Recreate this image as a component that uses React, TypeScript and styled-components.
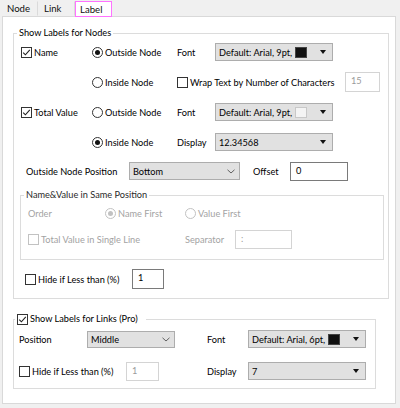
import styled, { createGlobalStyle } from "styled-components";

// Global
const GlobalStyle = createGlobalStyle`
  html, body {
    margin: 0;
    padding: 0;
    background: #f0f0f0;
  }
  body {
    font-family: Lato, "Liberation Sans", sans-serif;
    font-size: 9.2px;
    color: #000;
  }
`;

// Styled
const Window = styled.div`
  width: 400px;
  height: 408px;
  background: #f0f0f0;
  display: flex;
  flex-direction: column;
  overflow: hidden;
`;

const TabStrip = styled.div`
  display: flex;
  height: 16px;
  padding-left: 2px;
  align-items: flex-end;
  position: relative;
  z-index: 1;
`;

const Tab = styled.div<{ $active?: boolean; $width: number; $pad?: number }>`
  box-sizing: border-box;
  width: ${(p) => p.$width}px;
  height: ${(p) => (p.$active ? 16 : 15)}px;
  margin-bottom: ${(p) => (p.$active ? -1 : 0)}px;
  padding-left: ${(p) => p.$pad ?? 4}px;
  display: flex;
  align-items: center;
  font-size: 9.6px;
  background: ${(p) => (p.$active ? "#fff" : "#f0f0f0")};
  border: 1px solid ${(p) => (p.$active ? "#ff72ff" : "transparent")};
  border-right-color: ${(p) => (p.$active ? "#ff72ff" : "#dadada")};
  color: #111;
`;

const Panel = styled.div`
  box-sizing: border-box;
  width: 394px;
  height: 388px;
  margin-left: 2px;
  background: #fff;
  border: 1px solid #d9d9d9;
  padding: 9px 0 0 10px;
`;

const Group = styled.fieldset<{ $width: number }>`
  box-sizing: border-box;
  width: ${(p) => p.$width}px;
  margin: 0;
  border: 1px solid #dcdcdc;
  min-width: 0;
`;

const NodeGroup = styled(Group)`
  padding: 0 0 8px 7px;
`;

const LinkGroup = styled(Group)`
  margin-top: 13px;
  padding: 3px 0 7px 5px;
`;

const InnerGroup = styled(Group)`
  margin: 6px 0 0 -1px;
  padding: 0 0 9px 7px;
`;

const Legend = styled.legend<{ $muted?: boolean; $right?: number }>`
  padding: 0 ${(p) => p.$right ?? 2}px 0 2px;
  margin-left: -4px;
  line-height: 14px;
  height: 14px;
  display: flex;
  align-items: center;
  color: ${(p) => (p.$muted ? "#2a2a2a" : "#000")};
`;

const NodeGrid = styled.div`
  display: grid;
  grid-template-columns: 71px 85px 38px 118px 12px 35px;
  grid-auto-rows: 24px;
  row-gap: 6px;
  align-items: center;
`;

const InnerGrid = styled.div`
  display: grid;
  grid-template-columns: 77px 80px 50px 57px;
  grid-auto-rows: 22px;
  row-gap: 4px;
  align-items: center;
`;

const LinkGrid = styled.div`
  display: grid;
  grid-template-columns: 68px 88px 32px 41px 118px;
  grid-template-rows: 20px 20px;
  row-gap: 12px;
  align-items: center;
`;

const Row = styled.div<{ $top: number; $indent: number }>`
  display: flex;
  align-items: center;
  height: 22px;
  margin-top: ${(p) => p.$top}px;
  padding-left: ${(p) => p.$indent}px;
`;

const Cell = styled.div<{ $span?: string }>`
  display: flex;
  align-items: center;
  grid-column: ${(p) => p.$span ?? "auto"};
`;

const Text = styled.span<{ $disabled?: boolean; $width?: number }>`
  color: ${(p) => (p.$disabled ? "#a3a3a3" : "#000")};
  white-space: nowrap;
  ${(p) => (p.$width ? `width: ${p.$width}px; flex: none;` : "")}
`;

const Option = styled.label<{ $width?: number }>`
  display: flex;
  align-items: center;
  gap: 2px;
  white-space: nowrap;
  ${(p) => (p.$width ? `width: ${p.$width}px; flex: none;` : "")}
`;

const Box = styled.span<{ $disabled?: boolean }>`
  box-sizing: border-box;
  width: 11px;
  height: 11px;
  flex: none;
  border: 1px solid ${(p) => (p.$disabled ? "#c2c2c2" : "#333")};
  background: #fff;
  display: flex;
  align-items: center;
  justify-content: center;
`;

const Circle = styled(Box)`
  border-radius: 50%;
`;

const Dot = styled.span<{ $disabled?: boolean }>`
  width: 5px;
  height: 5px;
  border-radius: 50%;
  background: ${(p) => (p.$disabled ? "#c2c2c2" : "#111")};
`;

const Combo = styled.div<{ $width: number; $height: number }>`
  box-sizing: border-box;
  width: ${(p) => p.$width}px;
  height: ${(p) => p.$height}px;
  flex: none;
  background: #e1e1e1;
  border: 1px solid #adadad;
  display: flex;
  align-items: center;
  padding: 0 3px 0 3px;
  color: #000;
`;

const ComboText = styled.span`
  flex: 1;
  min-width: 0;
  white-space: nowrap;
`;

const Swatch = styled.span<{ $light?: boolean }>`
  box-sizing: border-box;
  flex: none;
  width: 12px;
  height: 11px;
  margin: 0 13px 0 2px;
  background: ${(p) => (p.$light ? "#f4f4f4" : "#111")};
  border: 1px solid ${(p) => (p.$light ? "#c8c8c8" : "#444")};
`;

const Arrow = styled.span`
  flex: none;
  width: 0;
  height: 0;
  border-left: 3.5px solid transparent;
  border-right: 3.5px solid transparent;
  border-top: 4px solid #111;
  margin-right: 3px;
`;

const Field = styled.div<{
  $width: number;
  $height: number;
  $disabled?: boolean;
}>`
  box-sizing: border-box;
  width: ${(p) => p.$width}px;
  height: ${(p) => p.$height}px;
  flex: none;
  border: 1px solid ${(p) => (p.$disabled ? "#d4d4d4" : "#7a7a7a")};
  background: #fff;
  color: ${(p) => (p.$disabled ? "#9a9a9a" : "#000")};
  padding: 1px 0 0 5px;
  line-height: 14px;
`;

// Parts
const CheckBox = ({
  label,
  checked,
  disabled,
  width,
}: {
  label: string;
  checked?: boolean;
  disabled?: boolean;
  width?: number;
}) => (
  <Option $width={width}>
    <Box $disabled={disabled}>
      {checked && (
        <svg width="9" height="9" viewBox="0 0 9 9">
          <polyline
            points="1.2,4.6 3.4,6.8 7.8,1.8"
            fill="none"
            stroke="#222"
            strokeWidth="1.1"
          />
        </svg>
      )}
    </Box>
    <Text $disabled={disabled}>{label}</Text>
  </Option>
);

const RadioButton = ({
  label,
  checked,
  disabled,
}: {
  label: string;
  checked?: boolean;
  disabled?: boolean;
}) => (
  <Option>
    <Circle $disabled={disabled}>{checked && <Dot $disabled={disabled} />}</Circle>
    <Text $disabled={disabled}>{label}</Text>
  </Option>
);

const Chevron = () => (
  <svg width="8" height="5" viewBox="0 0 8 5" style={{ marginRight: 1 }}>
    <polyline points="0.5,0.8 4,4 7.5,0.8" fill="none" stroke="#606060" strokeWidth="1" />
  </svg>
);

const Select = ({
  value,
  width,
  height = 18,
  swatch,
  chevron,
}: {
  value: string;
  width: number;
  height?: number;
  swatch?: "dark" | "light";
  chevron?: boolean;
}) => (
  <Combo $width={width} $height={height}>
    <ComboText>{value}</ComboText>
    {swatch && <Swatch $light={swatch === "light"} />}
    {chevron ? <Chevron /> : <Arrow />}
  </Combo>
);

const App = () => {
  return (
    <>
      <GlobalStyle />
      <Window>
        <TabStrip>
          <Tab $width={36}>Node</Tab>
          <Tab $width={37} $pad={5}>
            Link
          </Tab>
          <Tab $width={37} $active>
            Label
          </Tab>
        </TabStrip>
        <Panel>
          <NodeGroup $width={376}>
            <Legend>Show Labels for Nodes</Legend>
            <NodeGrid>
              <CheckBox label="Name" checked />
              <RadioButton label="Outside Node" checked />
              <Text>Font</Text>
              <Select value="Default: Arial, 9pt," width={118} swatch="dark" />
              <span />
              <span />

              <span />
              <RadioButton label="Inside Node" />
              <Cell $span="3 / 5">
                <CheckBox label="Wrap Text by Number of Characters" />
              </Cell>
              <span />
              <Field $width={35} $height={20} $disabled>
                15
              </Field>

              <CheckBox label="Total Value" checked />
              <RadioButton label="Outside Node" />
              <Text>Font</Text>
              <Select value="Default: Arial, 9pt," width={118} swatch="light" />
              <span />
              <span />

              <span />
              <RadioButton label="Inside Node" checked />
              <Text>Display</Text>
              <Select value="12.34568" width={118} />
            </NodeGrid>

            <Row $top={6} $indent={5}>
              <Text $width={103}>Outside Node Position</Text>
              <Select value="Bottom" width={111} chevron />
              <Text $width={37} style={{ marginLeft: 13 }}>
                Offset
              </Text>
              <Field $width={58} $height={19}>
                0
              </Field>
            </Row>

            <InnerGroup $width={364}>
              <Legend $muted>Name&amp;Value in Same Position</Legend>
              <InnerGrid>
                <Text $disabled>Order</Text>
                <RadioButton label="Name First" checked disabled />
                <Cell $span="3 / 5">
                  <RadioButton label="Value First" disabled />
                </Cell>

                <Cell $span="1 / 3">
                  <CheckBox label="Total Value in Single Line" disabled />
                </Cell>
                <Text $disabled>Separator</Text>
                <Field $width={57} $height={19} $disabled>
                  :
                </Field>
              </InnerGrid>
            </InnerGroup>

            <Row $top={8} $indent={4}>
              <CheckBox label="Hide if Less than (%)" width={107} />
              <Field $width={32} $height={20}>
                1
              </Field>
            </Row>
          </NodeGroup>

          <LinkGroup $width={363}>
            <Legend $right={8}>
              <CheckBox label="Show Labels for Links (Pro)" checked />
            </Legend>
            <LinkGrid>
              <Text>Position</Text>
              <Select value="Middle" width={88} height={17} chevron />
              <span />
              <Text>Font</Text>
              <Select value="Default: Arial, 6pt," width={118} swatch="dark" />

              <Cell $span="1 / 4">
                <CheckBox label="Hide if Less than (%)" width={107} />
                <Field $width={33} $height={19} $disabled>
                  1
                </Field>
              </Cell>
              <Text>Display</Text>
              <Select value="7" width={118} />
            </LinkGrid>
          </LinkGroup>
        </Panel>
      </Window>
    </>
  );
};

export default App;
